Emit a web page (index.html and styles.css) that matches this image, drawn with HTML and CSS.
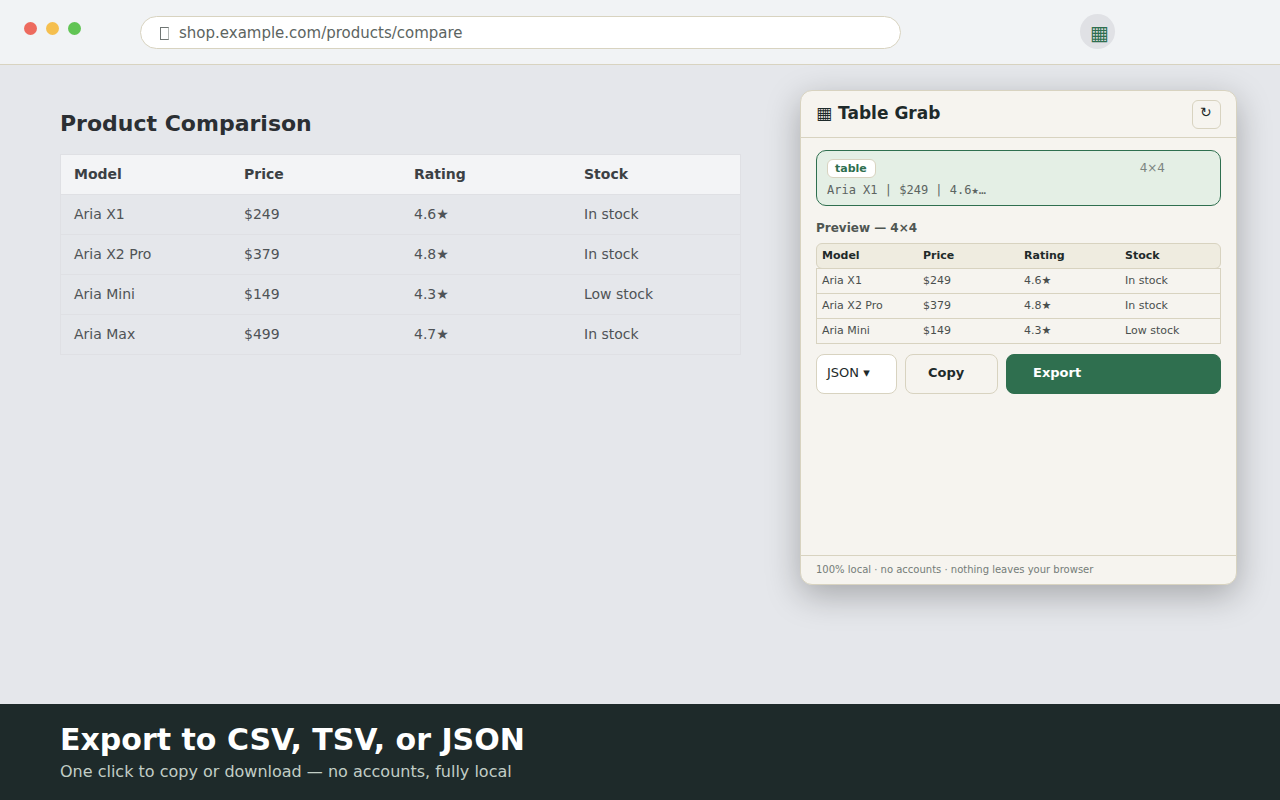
FILE: index.html
```html
<!DOCTYPE html>
<html lang="en">
<head>
    <meta charset="UTF-8">
    <title>Table Grab</title>
    <meta name="viewport" content="width=device-width, initial-scale=1.0"/>
    <link rel="stylesheet" href="styles.css">
</head>
<body>

<!--browser bar-->
<header class="browser">
    <div class="dots">
        <span class="dot red"></span>
        <span class="dot yellow"></span>
        <span class="dot green"></span>
    </div>
    <div class="url"><span class="url-icon"></span><span class="url-text">shop.example.com/products/compare</span></div>
    <div class="extension">▦</div>
</header>

<main class="content">

    <section class="page">
        <h2>Product Comparison</h2>
        <div class="products">
            <div class="row head"><span>Model</span><span>Price</span><span>Rating</span><span>Stock</span></div>
            <div class="row"><span>Aria X1</span><span>$249</span><span>4.6★</span><span>In stock</span></div>
            <div class="row"><span>Aria X2 Pro</span><span>$379</span><span>4.8★</span><span>In stock</span></div>
            <div class="row"><span>Aria Mini</span><span>$149</span><span>4.3★</span><span>Low stock</span></div>
            <div class="row"><span>Aria Max</span><span>$499</span><span>4.7★</span><span>In stock</span></div>
        </div>
    </section>

    <!--extension popup-->
    <section class="popup">
        <div class="popup-header">
            <h3><span class="logo">▦</span><span class="name">Table Grab</span></h3>
            <button class="refresh">↻</button>
        </div>

        <div class="popup-body">
            <div class="found">
                <div class="found-top">
                    <span class="tag">table</span>
                    <span class="size">4×4</span>
                </div>
                <div class="snippet">Aria X1 | $249 | 4.6★…</div>
            </div>

            <div class="preview-title">Preview — 4×4</div>
            <div class="preview">
                <div class="row head"><span>Model</span><span>Price</span><span>Rating</span><span>Stock</span></div>
                <div class="row"><span>Aria X1</span><span>$249</span><span>4.6★</span><span>In stock</span></div>
                <div class="row"><span>Aria X2 Pro</span><span>$379</span><span>4.8★</span><span>In stock</span></div>
                <div class="row"><span>Aria Mini</span><span>$149</span><span>4.3★</span><span>Low stock</span></div>
            </div>

            <div class="actions">
                <button class="format">JSON ▾</button>
                <button class="copy">Copy</button>
                <button class="export">Export</button>
            </div>
        </div>

        <div class="popup-footer">100% local · no accounts · nothing leaves your browser</div>
    </section>
</main>

<!--caption-->
<footer class="banner">
    <h1>Export to CSV, TSV, or JSON</h1>
    <p>One click to copy or download — no accounts, fully local</p>
</footer>

</body>
</html>
```
FILE: styles.css
```css
* {
    box-sizing: border-box;
}

body {
    display: flex;
    flex-direction: column;
    width: 1280px;
    height: 800px;
    margin: 0;
    overflow: hidden;
    background: #e5e7eb;
    color: #1e2a2a;
    font-family: "DejaVu Sans", sans-serif;
}

h1, h2, h3, p {
    margin: 0;
}

button {
    padding: 0;
    font-family: inherit;
    color: inherit;
    text-align: left;
}

/* browser bar */
.browser {
    display: flex;
    flex: none;
    align-items: flex-start;
    height: 65px;
    padding-left: 24px;
    background: #f1f3f5;
    border-bottom: 1px solid #d8d3c0;
}

.dots {
    display: flex;
    gap: 9px;
    width: 116px;
    padding-top: 22px;
}

.dot {
    width: 13px;
    height: 13px;
    border-radius: 50%;
}

.red { background: #ed6a5e; }
.yellow { background: #f5bf4f; }
.green { background: #61c454; }

.url {
    display: flex;
    align-items: center;
    width: 761px;
    height: 33px;
    margin-top: 16px;
    padding-left: 19px;
    background: #fff;
    border: 1px solid #d8d3c0;
    border-radius: 17px;
    color: #5c6461;
    font-size: 15px;
    line-height: 18px;
}

.url-icon {
    width: 9px;
    height: 13px;
    margin: 2px 10px 0 0;
    border: 1px solid #6f7573;
    border-right-color: #b4b8b6;
}

.extension {
    width: 35px;
    height: 35px;
    margin: 14px 0 0 179px;
    padding-left: 10px;
    background: #e0e1e5;
    border-radius: 50%;
    color: #2f6f4f;
    font-size: 20px;
    line-height: 38px;
}

.content {
    display: flex;
    flex: 1;
    align-items: flex-start;
    padding: 25px 0 0 60px;
}

/* shop page */
.page {
    width: 681px;
    margin-right: 59px;
}

h2 {
    padding-top: 21px;
    font-size: 22px;
    line-height: 26px;
    color: #2b2f33;
}

.row {
    display: grid;
}

.products {
    margin-top: 17px;
    font-size: 14px;
    color: #4f5356;
}

.products .row {
    grid-template-columns: repeat(4, 170px);
    height: 41px;
    margin-bottom: -1px;
    padding-left: 13px;
    border: 1px solid #dfe0e4;
    line-height: 38px;
}

.products .head {
    background: #f3f4f6;
    color: #3b4044;
    font-weight: bold;
}

/* popup */
.popup {
    display: flex;
    flex-direction: column;
    width: 437px;
    height: 495px;
    background: #f6f4ef;
    border: 1px solid #d8d3c0;
    border-radius: 12px;
    box-shadow: 0 10px 34px rgba(0, 0, 0, 0.28);
}

.popup-header {
    display: flex;
    justify-content: space-between;
    height: 47px;
    padding: 9px 15px 0;
    border-bottom: 1px solid #d8d3c0;
}

h3 {
    display: flex;
    gap: 6px;
    font-size: 17px;
    line-height: 26px;
}

.logo {
    font-weight: normal;
}

.refresh {
    display: flex;
    align-items: flex-start;
    width: 29px;
    height: 29px;
    padding: 1px 0 0 7px;
    background: none;
    border: 1px solid #d8d3c0;
    border-radius: 6px;
    font-size: 14px;
    line-height: 20px;
}

.popup-body {
    flex: 1;
    padding: 12px 15px 0;
}

.found {
    height: 56px;
    padding: 8px 10px 0;
    background: #e4efe5;
    border: 1px solid #2f6f4f;
    border-radius: 10px;
}

.found-top {
    display: flex;
    justify-content: space-between;
    padding-right: 45px;
}

.tag {
    width: 49px;
    height: 19px;
    padding-left: 7px;
    background: #fff;
    border: 1px solid #d8d3c0;
    border-radius: 6px;
    color: #2f6f4f;
    font-size: 11px;
    font-weight: bold;
    line-height: 17px;
}

.size {
    color: #7c8580;
    font-size: 12px;
    line-height: 18px;
}

.snippet {
    margin-top: 5px;
    color: #5c6461;
    font-family: "DejaVu Sans Mono", monospace;
    font-size: 12px;
    line-height: 14px;
}

.preview-title {
    margin-top: 15px;
    color: #4f5652;
    font-size: 12px;
    font-weight: bold;
    line-height: 14px;
}

.preview {
    margin-top: 8px;
    font-size: 11px;
    color: #4a4f4d;
}

.preview .row {
    grid-template-columns: repeat(4, 101px);
    height: 26px;
    margin-bottom: -1px;
    padding-left: 5px;
    border: 1px solid #d8d3c0;
    line-height: 24px;
}

.preview .head {
    background: #efece0;
    border-radius: 6px;
    color: #1e2a2a;
    font-weight: bold;
}

.actions {
    display: flex;
    gap: 8px;
    margin-top: 11px;
}

.actions button {
    height: 40px;
    padding-bottom: 2px;
    border: 1px solid #d8d3c0;
    border-radius: 8px;
    font-size: 13px;
    line-height: 36px;
}

.actions .format {
    width: 81px;
    padding-left: 10px;
    background: #fff;
}

.actions .copy {
    width: 93px;
    padding-left: 22px;
    background: none;
    font-weight: bold;
}

.actions .export {
    flex: 1;
    padding-left: 26px;
    background: #2f6f4f;
    border-color: #2f6f4f;
    color: #fff;
    font-weight: bold;
}

.popup-footer {
    height: 29px;
    padding-left: 15px;
    border-top: 1px solid #d8d3c0;
    color: #747c78;
    font-size: 10px;
    line-height: 28px;
}

/* caption */
.banner {
    flex: none;
    height: 96px;
    padding: 18px 0 0 60px;
    background: #1e2a2a;
}

.banner h1 {
    color: #fff;
    font-size: 30px;
    line-height: 35px;
}

.banner p {
    margin-top: 5px;
    color: #c2cec6;
    font-size: 16px;
    line-height: 19px;
}
```
